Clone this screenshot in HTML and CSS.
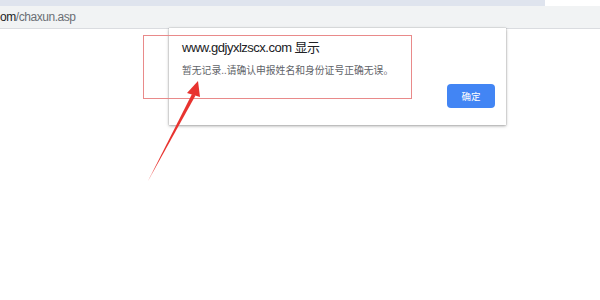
FILE: index.html
```html
<!DOCTYPE html>
<html>
<head>
<meta charset="utf-8">
<link rel="stylesheet" href="styles.css">
</head>
<body>
<div class="top-strip"><div class="tab-area"></div></div>
<div class="address-bar"><span class="host">om</span><span class="path">/chaxun.asp</span></div>
<div class="page">
  <div class="dialog">
    <div class="dialog-title">www.gdjyxlzscx.com 显示</div>
    <div class="dialog-msg">暂无记录..请确认申报姓名和身份证号正确无误。</div>
    <div class="dialog-actions"><button class="ok-btn">确定</button></div>
  </div>
  <div class="highlight"></div>
  <svg class="arrow" width="600" height="300" viewBox="0 0 600 300">
    <path d="M148 181 L192 94 L195.5 95.5 Z" fill="#e8332f"/>
    <path d="M198 81 L187 93 L200 97 Z" fill="#e8332f"/>
  </svg>
</div>
</body>
</html>
```
FILE: styles.css
```css
html, body {
  margin: 0;
  padding: 0;
  background: #fff;
  width: 600px;
  height: 300px;
  overflow: hidden;
  font-family: "Noto Sans CJK SC", "Liberation Sans", sans-serif;
}
.top-strip {
  height: 6px;
  background: #fff;
}
.tab-area {
  width: 545px;
  height: 6px;
  background: #dfe4ee;
}
.address-bar {
  height: 22px;
  background: #f1f3f4;
  border-bottom: 1px solid #dadce0;
  font-family: "Liberation Sans", "Noto Sans", sans-serif;
  font-size: 12px;
  letter-spacing: -0.45px;
  line-height: 22px;
}
.host { color: #202124; }
.path { color: #6b6f74; }
.page {
  position: relative;
  height: 271px;
}
.dialog {
  position: absolute;
  left: 169px;
  top: -1px;
  width: 337px;
  height: 97px;
  background: #fff;
  box-shadow: 0 1px 3px rgba(0,0,0,0.35), 0 0 1px rgba(0,0,0,0.3);
  box-sizing: border-box;
  padding: 11px 12px 0 13px;
}
.dialog-title {
  font-family: "Liberation Sans", "Noto Sans CJK SC", sans-serif;
  font-size: 13px;
  letter-spacing: -0.5px;
  color: #202124;
  line-height: 18px;
}
.dialog-msg {
  margin-top: 5px;
  font-size: 9.8px;
  color: #5f6368;
  line-height: 16px;
}
.dialog-actions {
  display: flex;
  justify-content: flex-end;
  margin-top: 6px;
}
.ok-btn {
  width: 48px;
  height: 24px;
  margin-right: -1px;
  border: none;
  border-radius: 4px;
  background: #4285f4;
  color: #fff;
  font-size: 9.5px;
  font-family: "Noto Sans CJK SC", sans-serif;
  padding: 0;
}
.highlight {
  position: absolute;
  left: 143px;
  top: 6px;
  width: 267px;
  height: 62px;
  border: 1px solid #e98a8a;
}
.arrow {
  position: absolute;
  left: 0;
  top: -29px;
}
```
